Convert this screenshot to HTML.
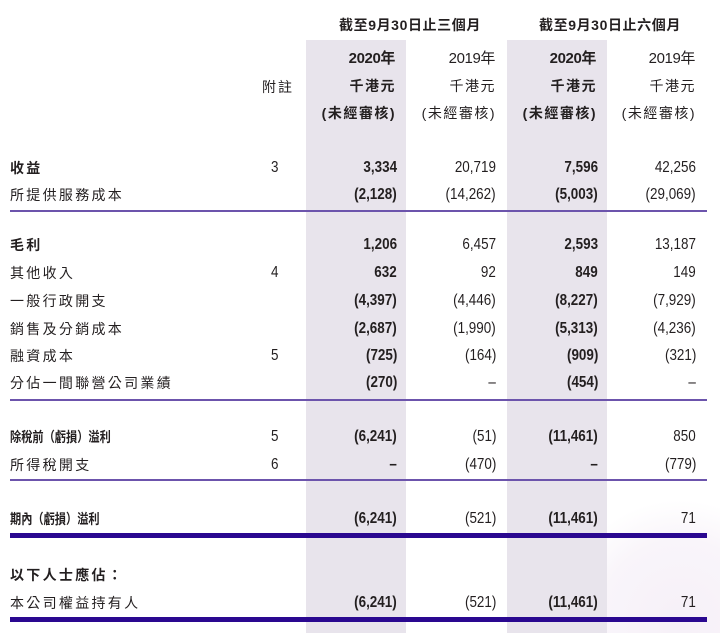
<!DOCTYPE html>
<html><head><meta charset="utf-8"><style>
*{margin:0;padding:0;box-sizing:border-box}
html,body{width:720px;height:633px;overflow:hidden}
body{background:#fff;position:relative;font-family:"Liberation Sans","Noto Sans CJK TC",sans-serif;color:#231f20}
.wrap{position:absolute;left:0;top:0;width:720px;height:633px;overflow:hidden}
.bg{position:absolute;left:540px;top:500px;width:180px;height:133px;background:radial-gradient(circle at 140px 120px,#f6f0f8 0,#f9f5fa 80px,#fff 120px)}
.sh{position:absolute;top:40px;width:100px;height:593px;background:#e8e4ec}
.t{position:absolute;white-space:nowrap;font-size:14px;line-height:16px}
.l{left:10px;letter-spacing:2.3px}
.b{font-weight:bold}
.n{transform:scaleX(.84);transform-origin:right center;font-size:16px}
.sq{transform:scaleX(.8);transform-origin:left center;letter-spacing:0}
.hy{font-size:15px;letter-spacing:-.4px}
.hk1{font-size:14px;letter-spacing:1.5px}
.hp{font-size:14px;letter-spacing:1.5px}
.hr{position:absolute;left:10px;width:697px;height:2px;background:#6c54ac}
.hk{position:absolute;left:10px;width:697px;height:5px;background:#2a0890}
</style></head><body>
<div class="wrap">
<div class="bg"></div>
<div class="sh" style="left:306px"></div>
<div class="sh" style="left:507px"></div>

<div class="t b" style="left:339px;top:17px;letter-spacing:.6px">截至9月30日止三個月</div>
<div class="t b" style="left:539px;top:17px;letter-spacing:.6px">截至9月30日止六個月</div>
<div class="t" style="left:262px;top:79px;letter-spacing:2px">附註</div>

<div class="t hy b" style="right:325px;top:51px">2020年</div>
<div class="t hk1 b" style="right:324px;top:78px">千港元</div>
<div class="t hp b" style="right:324px;top:105px">(未經審核)</div>
<div class="t hy" style="right:225px;top:51px">2019年</div>
<div class="t hk1" style="right:224px;top:78px">千港元</div>
<div class="t hp" style="right:224px;top:105px">(未經審核)</div>
<div class="t hy b" style="right:124px;top:51px">2020年</div>
<div class="t hk1 b" style="right:123px;top:78px">千港元</div>
<div class="t hp b" style="right:123px;top:105px">(未經審核)</div>
<div class="t hy" style="right:25px;top:51px">2019年</div>
<div class="t hk1" style="right:24px;top:78px">千港元</div>
<div class="t hp" style="right:24px;top:105px">(未經審核)</div>

<div class="hr" style="top:210px"></div>
<div class="hr" style="top:399px"></div>
<div class="hr" style="top:479px"></div>
<div class="hk" style="top:533px"></div>
<div class="hk" style="top:617px"></div>
</div>
<script>
var R=[397,496,598,696];
var h='';
var rows=[
['收益',1,'3',168,['3,334','20,719','7,596','42,256']],
['所提供服務成本',0,'',195,['(2,128)','(14,262)','(5,003)','(29,069)']],
['毛利',1,'',245,['1,206','6,457','2,593','13,187']],
['其他收入',0,'4',273,['632','92','849','149']],
['一般行政開支',0,'',301,['(4,397)','(4,446)','(8,227)','(7,929)']],
['銷售及分銷成本',0,'',329,['(2,687)','(1,990)','(5,313)','(4,236)']],
['融資成本',0,'5',356,['(725)','(164)','(909)','(321)']],
['分佔一間聯營公司業績',0,'',383,['(270)','–','(454)','–']],
['除稅前（虧損）溢利',1,'5',437,['(6,241)','(51)','(11,461)','850']],
['所得稅開支',0,'6',465,['–','(470)','–','(779)']],
['期內（虧損）溢利',1,'',519,['(6,241)','(521)','(11,461)','71']],
['以下人士應佔：',1,'',575,null],
['本公司權益持有人',0,'',603,['(6,241)','(521)','(11,461)','71']]
];
rows.forEach(function(r){
 var y=r[3];
 var sq=r[0].indexOf('（')>=0?' sq':'';
 h+='<div class="t l'+(r[1]?' b':'')+sq+'" style="top:'+(y-8)+'px">'+r[0]+'</div>';
 if(r[2])h+='<div class="t n" style="left:271px;top:'+(y-8)+'px;transform-origin:left center">'+r[2]+'</div>';
 if(r[4])r[4].forEach(function(v,i){
  var bold=(i%2==0)?' b':'';
  h+='<div class="t n'+bold+'" style="right:'+(720-R[i])+'px;top:'+(y-8)+'px">'+v+'</div>';
 });
});
document.querySelector('.wrap').insertAdjacentHTML('beforeend',h);
</script>
</body></html>
